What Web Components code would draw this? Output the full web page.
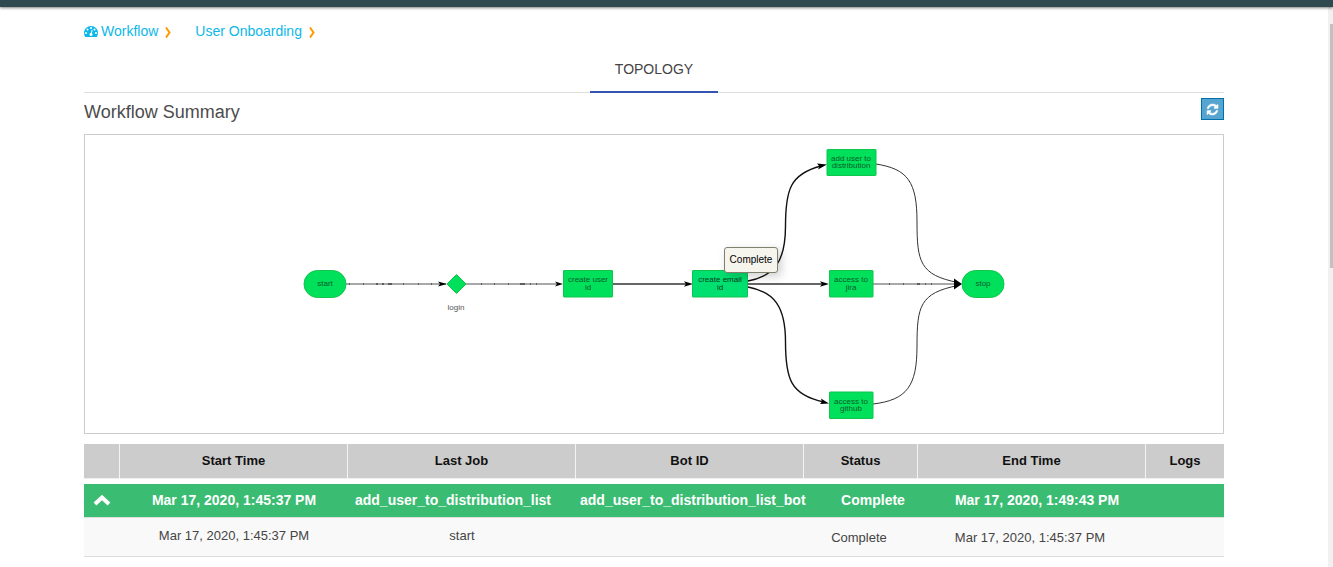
<!DOCTYPE html>
<html lang="en">
<head>
<meta charset="utf-8">
<title>Workflow - User Onboarding</title>
<style>
  html, body { height: 100%; margin: 0; }
  body { overflow: hidden; background: #fff; font: 13px/18px "Liberation Sans", Arial, sans-serif; color: #444; }
</style>
</head>
<body>
<workflow-app>
  <bread-crumbs slot="nav"></bread-crumbs>
  <tab-strip>TOPOLOGY</tab-strip>
  <section-heading>Workflow Summary</section-heading>
  <topology-graph>Complete</topology-graph>
  <job-table></job-table>
</workflow-app>
<script>
const define = (name, html) => {
  const template = document.createElement('template');
  template.innerHTML = html;
  customElements.define(name, class extends HTMLElement {
    constructor() {
      super();
      this.attachShadow({ mode: 'open' }).append(template.content.cloneNode(true));
    }
  });
};

define('workflow-app', `
<style>
  :host { display: flex; flex-direction: column; height: 100%; }
  header { flex: none; height: 7px; background: #2f4950; box-shadow: 0 1px 3px rgba(0,0,0,.5); z-index: 1; }
  .body { flex: 1; display: flex; min-height: 0; }
  main { flex: 1; min-width: 0; overflow: hidden; padding: 15px 104px 0 84px; }
  .rail { width: 5px; padding: 17px 0 0 2px; box-sizing: border-box; background: #f1f1f1; }
  .thumb { height: 244px; background: #c1c1c1; }
</style>
<header></header>
<div class="body">
  <main><slot name="nav"></slot><slot></slot></main>
  <div class="rail" aria-hidden="true"><div class="thumb"></div></div>
</div>`);

define('bread-crumbs', `
<style>
  :host { display: block; font-size: 14px; line-height: 18px; }
  nav { display: flex; align-items: center; }
  a { display: flex; align-items: center; gap: 3px; color: #0db7e8; text-decoration: none; }
  .sep { width: 6px; height: 11px; margin: 2px 24px 0 7px; fill: none; stroke: #f90; stroke-width: 2; }
</style>
<nav aria-label="Breadcrumb">
  <a href="#workflow"><svg width="14" height="11" viewBox="0 0 1792 1408" fill="currentColor"><path d="M384 896q0-53-37.5-90.5t-90.5-37.5-90.5 37.5-37.5 90.5 37.5 90.5 90.5 37.5 90.5-37.5 37.5-90.5zm192-448q0-53-37.5-90.5t-90.5-37.5-90.5 37.5-37.5 90.5 37.5 90.5 90.5 37.5 90.5-37.5 37.5-90.5zm428 481l101-382q6-26-7.500-48.500t-38.500-29.500-48 6.500-30 39.500l-101 382q-60 5-107 43.500t-63 98.500q-20 77 20 146t117 89 146-20 89-117q16-60-6-117t-72-91zm660-33q0-53-37.500-90.500t-90.500-37.500-90.500 37.500-37.500 90.500 37.500 90.500 90.500 37.500 90.500-37.500 37.500-90.500zm-640-640q0-53-37.500-90.500t-90.500-37.500-90.500 37.500-37.500 90.500 37.500 90.500 90.500 37.500 90.500-37.500 37.500-90.500zm448 192q0-53-37.500-90.500t-90.500-37.500-90.500 37.500-37.500 90.500 37.500 90.500 90.500 37.500 90.500-37.500 37.500-90.500zm320 448q0 261-141 483-19 29-54 29h-1402q-35 0-54-29-141-221-141-483 0-182 71-348t191-286 286-191 348-71 348 71 286 191 191 286 71 348z"/></svg>Workflow</a>
  <svg class="sep" viewBox="0 0 6 11"><path d="M1 .5 4.500 5.500 1 10.500"/></svg>
  <a href="#user-onboarding">User Onboarding</a>
  <svg class="sep" viewBox="0 0 6 11"><path d="M1 .5 4.500 5.500 1 10.500"/></svg>
</nav>`);

define('tab-strip', `
<style>
  :host { display: flex; justify-content: center; margin-top: 6px; border-bottom: 1px solid #ddd; }
  button { width: 128px; height: 47px; margin-bottom: -1px; padding: 0; border: 0; border-bottom: 2px solid #3553b0;
           background: none; font: 14px/20px "Liberation Sans", Arial, sans-serif; color: #444; }
</style>
<button type="button" role="tab" aria-selected="true"><slot></slot></button>`);

define('section-heading', `
<style>
  :host { display: flex; justify-content: space-between; align-items: center; height: 41px; }
  h2 { margin: 0 0 4px; font-size: 18px; line-height: 24px; font-weight: 400; color: #4c4c4c; }
  button { display: grid; place-items: center; width: 23px; height: 22px; margin: 0 0 9px; padding: 0;
           background: #56a4d0; border: 1px solid #0070a8; color: #fff; }
</style>
<h2><slot></slot></h2>
<button type="button" aria-label="Refresh"><svg width="13" height="13" viewBox="0 0 1792 1792" fill="currentColor" stroke="currentColor" stroke-width="60"><path d="M1639 1056q0 5-1 7-64 268-268 434.500t-478 166.500q-146 0-282.500-55t-243.500-157l-129 129q-19 19-45 19t-45-19-19-45v-448q0-26 19-45t45-19h448q26 0 45 19t19 45-19 45l-137 137q71 66 161 102t187 36q134 0 250-65t186-179q11-17 53-117 8-23 30-23h192q13 0 22.500 9.500t9.500 22.500zm25-800v448q0 26-19 45t-45 19h-448q-26 0-45-19t-19-45 19-45l138-138q-148-137-349-137-134 0-250 65t-186 179q-11 17-53 117-8 23-30 23h-199q-13 0-22.500-9.500t-9.500-22.500v-7q65-268 270-434.500t480-166.500q146 0 284 55.500t245 156.500l130-129q19-19 45-19t45 19 19 45z"/></svg></button>`);

define('topology-graph', `
<style>
  :host { display: block; position: relative; border: 1px solid #ccc; }
  svg { display: block; width: 100%; height: 298px; font: 8px "Liberation Sans", Arial, sans-serif; }
  .node { fill: #00e05a; stroke: #10c44c; stroke-width: 1; }
  .edge { fill: none; stroke: #333; stroke-width: 1; }
  .flat { stroke: #8c8c8c; stroke-width: 1.5; }
  .ticks { stroke: #444; stroke-width: 1.5; }
  .strong { stroke: #111; stroke-width: 1.400; }
  text { text-anchor: middle; fill: #0a5c2c; }
  .tip { position: absolute; left: calc(50% + 70px); top: 112px; box-sizing: border-box; width: 54px; height: 26px;
         border: 1px solid #80806f; border-radius: 3px; background: #f5f4ed; box-shadow: 3px 3px 10px rgba(0,0,0,.2);
         font-size: 10px; line-height: 24px; text-align: center; color: #000; }
</style>
<svg viewBox="85 135 1138 298" role="img" aria-label="Workflow topology">
  <g class="edge flat"><path d="M346 284H446M466 284H557M873 284H955"/></g>
  <path class="edge ticks" d="M349 284h1M363 284h1M376 284h2M382 284h2M388 284h4M403 284h1M418 284h1M431 284h1M481 284h1M494 284h1M508 284h1M520 284h5M530 284h1M536 284h1M889 284h1M903 284h1M917 284h3M925 284h1M931 284h1"/>
  <path class="edge strong" style="stroke:#333" d="M613 284H688M748 284H824"/>
  <path class="edge strong" d="M748 281C774 276 785.500 262 785.500 226C785.500 190 790 174 821 166"/>
  <path class="edge strong" d="M748 287C774 292 785.500 306 785.500 342C785.500 378 790 395 824 402"/>
  <path class="edge" d="M876 164C908 169 917 182 917 222C917 262 920 275 958 282.500M873 404C907 400 917 386 917 346C917 306 920 293 958 285.500"/>
  <g fill="#000">
    <path d="M438 281.500 447 284 438 286.500 440 284zM555 281.500 563 284 555 286.500 557 284zM684 281.200 693 284 684 286.800 686 284zM820 281.200 829 284 820 286.800 822 284z"/>
    <path d="M817 163.500 827 164.500 818 169.500 819.500 166.500zM821 398.500 829 403.500 820 404 822 401.500zM954 278.500 962 284 954 289.500z"/>
  </g>
  <g class="node">
    <rect x="304" y="270.500" width="42" height="27" rx="13.500"/>
    <path d="M456.500 274.500 466 284 456.500 293.500 447 284z"/>
    <rect x="563.500" y="270.500" width="49" height="26.500" rx=".5"/>
    <rect x="692.500" y="270.500" width="55" height="26.500" rx=".5" fill="#00e070"/>
    <rect x="827" y="149.500" width="49" height="26" rx=".5"/>
    <rect x="829.500" y="270.500" width="43.500" height="26.500" rx=".5"/>
    <rect x="829.500" y="392" width="43.500" height="26.500" rx=".5"/>
    <rect x="962" y="270.500" width="42" height="27" rx="13.500"/>
  </g>
  <text x="325" y="286">start</text>
  <text x="456" y="310" style="fill:#555">login</text>
  <text x="588" y="282">create user</text><text x="588" y="290">id</text>
  <g style="fill:#033a1a"><text style="fill:inherit" x="720" y="282">create email</text><text style="fill:inherit" x="720" y="290">id</text></g>
  <text x="851" y="161">add user to</text><text x="851" y="168">distribution</text>
  <text x="851" y="282">access to</text><text x="851" y="290">jira</text>
  <text x="851" y="404">access to</text><text x="851" y="411">github</text>
  <text x="983" y="286">stop</text>
</svg>
<div class="tip" role="tooltip"><slot></slot></div>`);

define('job-table', `
<style>
  :host { display: block; margin-top: 10px; }
  table { width: 100%; table-layout: fixed; border-collapse: separate; border-spacing: 0; text-align: center; }
  th, td { padding: 0; white-space: nowrap; }
  .toggle { width: 36px; } .wide { width: 20%; } .mid { width: 10%; }
  thead th { height: 34px; background: #ccc; border-right: 1px solid #f4f4f4; border-bottom: 1px solid #eee; color: #111; font-weight: 700; }
  thead th:last-child { border-right: 0; }
  .gap td { height: 5px; }
  .run td { height: 31px; padding-bottom: 2px; background: #3abc72; border-bottom: 1px solid #ddd; color: #fff; font-size: 14px; font-weight: 700; }
  .run .job { padding-right: 18px; }
  .run .bot { padding-left: 4px; }
  .run .status { padding-left: 24px; }
  .run .finish { padding-left: 10px; }
  .step td { height: 36px; padding-bottom: 2px; background: #f9f9f9; border-bottom: 1px solid #ddd; color: #444; }
  .step .late { padding: 2px 4px 0 0; }
  button { display: grid; place-items: center; width: 100%; padding: 0; border: 0; background: none; color: #fff; }
</style>
<table>
  <colgroup><col class="toggle"><col class="wide"><col class="wide"><col class="wide"><col class="mid"><col class="wide"><col></colgroup>
  <thead><tr><th></th><th scope="col">Start Time</th><th scope="col">Last Job</th><th scope="col">Bot ID</th><th scope="col">Status</th><th scope="col">End Time</th><th scope="col">Logs</th></tr></thead>
  <tbody>
    <tr class="gap" aria-hidden="true"><td colspan="7"></td></tr>
    <tr class="run">
      <td><button type="button" aria-label="Collapse" aria-expanded="true"><svg width="18" height="12" viewBox="0 0 18 12" fill="none" stroke="currentColor" stroke-width="4"><path d="M2 10 9 3.500 16 10"/></svg></button></td>
      <td>Mar 17, 2020, 1:45:37 PM</td><td class="job">add_user_to_distribution_list</td><td class="bot">add_user_to_distribution_list_bot</td>
      <td class="status">Complete</td><td class="finish">Mar 17, 2020, 1:49:43 PM</td><td></td>
    </tr>
    <tr class="step">
      <td></td><td>Mar 17, 2020, 1:45:37 PM</td><td>start</td><td></td>
      <td class="late">Complete</td><td class="late">Mar 17, 2020, 1:45:37 PM</td><td></td>
    </tr>
  </tbody>
</table>`);
</script>
</body>
</html>
